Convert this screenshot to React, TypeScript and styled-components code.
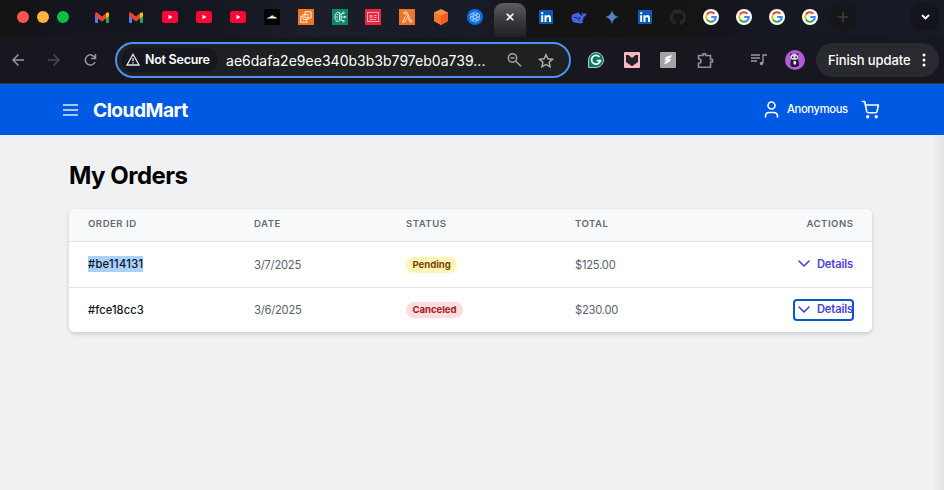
import React from "react";
import styled, { createGlobalStyle } from "styled-components";

const GlobalStyle = createGlobalStyle`
  * { box-sizing: border-box; }
  body { margin: 0; font-family: Inter, "Liberation Sans", sans-serif; background: #f0f1f3; overflow: hidden; }
  svg { display: block; flex: none; }
  button { font: inherit; border: 0; background: none; padding: 0; }
`;

const Window = styled.div`
  width: 944px;
  height: 490px;
  display: flex;
  flex-direction: column;
  overflow: hidden;
`;

/* ---------- Browser chrome ---------- */
const TabStrip = styled.div`
  height: 37px;
  flex: none;
  display: flex;
  align-items: stretch;
  background: linear-gradient(90deg, #141414 0, #141416 30px, #14151e 50px, #15161f 190px, #1b1d28 310px, #191b26 480px, #131314 535px, #141414 680px, #151721 760px, #171925 944px);
`;
const WindowControls = styled.div`
  width: 85px;
  height: 34px;
  padding-left: 17px;
  display: flex;
  align-items: center;
  gap: 8px;
`;
const Light = styled.span<{ $color: string }>`
  width: 12px;
  height: 12px;
  border-radius: 50%;
  background: ${(p) => p.$color};
`;
const Tab = styled.div<{ $width: number }>`
  width: ${(p) => p.$width}px;
  height: 34px;
  display: flex;
  align-items: center;
  justify-content: center;
  flex: none;
`;
const ActiveTab = styled.div`
  width: 32px;
  height: 34px;
  margin: 3px 3px 0 2px;
  padding-bottom: 6px;
  border-radius: 9px 9px 0 0;
  background: linear-gradient(#5c5c61, #39393e 50%, #202127);
  display: flex;
  align-items: center;
  justify-content: center;
  flex: none;
`;
const TabMenu = styled.div`
  width: 28px;
  height: 28px;
  margin: 3px 5px 0 auto;
  border-radius: 9px;
  background: #14151c;
  display: flex;
  align-items: center;
  justify-content: center;
`;
const NewTab = styled.div`
  width: 28px;
  height: 28px;
  margin: 3px 0 0 3px;
  border-radius: 50%;
  background: #14161a;
  display: flex;
  align-items: center;
  justify-content: center;
`;
const Toolbar = styled.div`
  height: 47px;
  flex: none;
  display: flex;
  align-items: center;
  background: #17181f;
  border-bottom: 1px solid #35363c;
  color: #fff;
`;
const Slot = styled.div<{ $width: number; $before?: number }>`
  width: ${(p) => p.$width}px;
  margin-left: ${(p) => p.$before ?? 0}px;
  display: flex;
  justify-content: center;
  flex: none;
`;
const NavButtons = styled.div`
  width: 115px;
  display: flex;
  align-items: center;
  flex: none;
`;
const AddressBar = styled.div`
  width: 456px;
  height: 36px;
  border: 2px solid #4e8ff0;
  border-radius: 18px;
  background: #1f2022;
  display: flex;
  align-items: center;
  padding-left: 4px;
  flex: none;
`;
const SecurityChip = styled.div`
  width: 97px;
  height: 24px;
  border-radius: 12px;
  background: #17181f;
  display: flex;
  align-items: center;
  gap: 5px;
  padding: 0 0 1px 5px;
  font-size: 12.5px;
  font-weight: 600;
  letter-spacing: -0.26px;
  white-space: nowrap;
  flex: none;
`;
const Address = styled.span`
  width: 280px;
  padding-left: 8px;
  font-size: 14px;
  letter-spacing: 0.02px;
  white-space: nowrap;
  flex: none;
`;
const Extensions = styled.div`
  width: 245px;
  padding-left: 7px;
  display: flex;
  align-items: center;
  flex: none;
`;
const UpdateButton = styled.button`
  width: 123px;
  height: 34px;
  border-radius: 17px;
  background: #292a30;
  color: #fff;
  font-size: 13px;
  font-weight: 500;
  letter-spacing: -0.08px;
  display: flex;
  align-items: center;
  gap: 11px;
  padding-left: 12px;
  white-space: nowrap;
`;

/* ---------- Site ---------- */
const SiteHeader = styled.header`
  height: 51px;
  flex: none;
  background: #0059e2;
  color: #fff;
  display: flex;
  align-items: center;
  padding: 0 64px 0 62px;
`;
const Brand = styled.span`
  margin: 1px auto 0 14px;
  font-size: 19.2px;
  line-height: 24px;
  font-weight: 700;
  letter-spacing: -0.52px;
`;
const UserName = styled.span`
  width: 61px;
  margin: 0 13px 1px 8px;
  font-size: 11.2px;
  font-weight: 500;
  letter-spacing: -0.35px;
  white-space: nowrap;
`;
const Content = styled.main`
  flex: 1;
  padding: 25px 72px 0 69px;
  background: linear-gradient(90deg, #f0f1f3 0, #f0f1f3 932px, #e9eaec 939px, #e1e2e4 944px);
`;
const Title = styled.h1`
  margin: 0 0 17px;
  font-size: 24px;
  line-height: 32px;
  font-weight: 700;
  letter-spacing: -0.5px;
  color: #000;
`;
const Table = styled.section`
  width: 803px;
  border-radius: 6px;
  overflow: hidden;
  background: #fff;
  box-shadow: 0 2px 4px rgba(0, 0, 0, 0.16);
`;
const Row = styled.div<{ $height: number; $head?: boolean; $last?: boolean }>`
  height: ${(p) => p.$height}px;
  display: grid;
  grid-template-columns: 166px 152px 169px 1fr 110px;
  align-items: center;
  padding: 0 19px;
  border-bottom: ${(p) => (p.$last ? "0" : "1px solid #dfe1e5")};
  background: ${(p) => (p.$head ? "#f8f9fb" : "#fff")};
  color: ${(p) => (p.$head ? "#646b78" : "#596170")};
  font-size: ${(p) => (p.$head ? 9.6 : 11.2)}px;
  font-weight: ${(p) => (p.$head ? 600 : 400)};
  letter-spacing: ${(p) => (p.$head ? 0.5 : -0.23)}px;
  line-height: 16px;
  padding-bottom: ${(p) => (p.$head ? 3 : 0)}px;
`;
const HeadEnd = styled.span`
  text-align: right;
  margin-right: -0.5px;
`;
const OrderId = styled.span<{ $selected: boolean }>`
  justify-self: start;
  margin-top: -1px;
  font-weight: 500;
  letter-spacing: ${(p) => (p.$selected ? 0.28 : 0.04)}px;
  color: #10131b;
  background: ${(p) => (p.$selected ? "#a8d1fb" : "transparent")};
`;
const Badge = styled.span<{ $tone: string }>`
  justify-self: start;
  height: 16px;
  padding: 0 6.5px;
  border-radius: 8px;
  font-size: 9.6px;
  font-weight: 700;
  letter-spacing: -0.05px;
  background: ${(p) => (p.$tone === "Pending" ? "#fff5b4" : "#ffdcdd")};
  color: ${(p) => (p.$tone === "Pending" ? "#7b440e" : "#9c1c20")};
`;
const DetailsButton = styled.button<{ $focused: boolean }>`
  justify-self: end;
  width: 61px;
  height: 22px;
  margin-right: -1px;
  border-radius: 4px;
  box-shadow: ${(p) => (p.$focused ? "inset 0 0 0 2px #075ac2" : "none")};
  color: #4a3edb;
  font-weight: 600;
  letter-spacing: -0.15px;
  display: flex;
  align-items: center;
  justify-content: flex-end;
  gap: 6.5px;
  padding: 0 1px 2px 0;
`;

const Gmail = () => (
  <svg width="14" height="11" viewBox="0 0 14 11">
    <path d="M0 2h3v9H1Q0 11 0 10z" fill="#3f83ed" />
    <path d="M11 2h3v8q0 1-1 1h-2z" fill="#22a94d" />
    <path d="M11 1.3 12 .5Q14-.4 14 2v2l-3 2.4z" fill="#fbbd12" />
    <path d="M0 2Q0-.4 2 .5l5 3.9 4-3.1v5.1L7 9.4 3 6.4 0 4z" fill="#e94335" />
  </svg>
);
const YouTube = () => (
  <svg width="16" height="12" viewBox="0 0 16 12">
    <rect width="16" height="12" rx="2.5" fill="#ff0634" />
    <path d="M6.5 3.7v4.6L10.5 6z" fill="#fff" />
  </svg>
);
const Horizon = () => (
  <svg width="16" height="16" viewBox="0 0 16 16">
    <path fill="#030303" d="M0 0h16v16H0z" />
    <path d="M2.500 9.500Q4 8 5.800 8q1.800-2.800 4.200-.4 2 .2 3.200 1.900z" fill="#f4eeee" />
    <path d="m8 6.300 2 1" stroke="#e2696d" />
  </svg>
);
const Ec2 = () => (
  <svg width="16" height="16" viewBox="0 0 16 16" fill="none" stroke="#ffe8d5" strokeWidth="1.100">
    <path fill="#ee7725" stroke="none" d="M0 0h16v16H0z" />
    <rect x="7" y="2.800" width="6.200" height="6.200" rx=".8" />
    <rect x="5" y="5.500" width="5" height="5" rx=".8" />
    <path d="M4.500 7.300H2.800v5.900h5.900v-2" />
  </svg>
);
const Brain = () => (
  <svg width="16" height="16" viewBox="0 0 16 16" fill="none" stroke="#d8fff2" strokeWidth=".9">
    <path fill="#128669" stroke="none" d="M0 0h16v16H0z" />
    <path d="M7.500 3.500Q5 2 4.500 4.500 2.500 5 3.200 7 2 9 3.600 10.500 4 13 6.200 12.500l1.300-.8zM4.500 5l1.500 1M3.500 8H6M4.500 11l1.300-1M9 4v8M9 6l2-2M9 8h4M9 10l2 2" />
    <circle cx="11.500" cy="3.800" r=".8" /><circle cx="13" cy="8" r=".8" /><circle cx="11.500" cy="12.200" r=".8" />
  </svg>
);
const Registry = () => (
  <svg width="16" height="16" viewBox="0 0 16 16" fill="none" stroke="#ffb3bd" strokeWidth=".9">
    <path fill="#e52843" stroke="none" d="M0 0h16v16H0z" />
    <rect x="2.500" y="3.500" width="11" height="9" /><path d="M5 6.500h2v2H5zM9 6.500h2.500M9 8.500h2.500M4.500 10.500H11" />
  </svg>
);
const Lambda = () => (
  <svg width="16" height="16" viewBox="0 0 16 16" fill="none" stroke="#fff1e5">
    <path fill="#ed7428" stroke="none" d="M0 0h16v16H0z" />
    <path d="M5 3h3l3.700 8.500.9-.4.6 1.300-2.300.8L7.200 4.800H5zM6.600 7.500 3.500 13h2.200l2.200-3.700" strokeWidth=".85" />
  </svg>
);
const Cube = () => (
  <svg width="16" height="16" viewBox="0 0 16 16">
    <path d="m8 0 7 3.500V12l-7 4-7-4V3.500z" fill="#f98f43" />
    <path d="m1 3.500 7 3.200V16l-7-4z" fill="#f1762f" /><path d="m15 3.500-7 3.200V16l7-4z" fill="#f6591d" />
  </svg>
);
const Swirl = () => (
  <svg width="16" height="16" viewBox="0 0 16 16" fill="none" stroke="#bddcff" strokeWidth=".75">
    <circle cx="8" cy="8" r="8" fill="#086ce6" stroke="none" />
    {[0, 60, 120, 180, 240, 300].map((a) => (
      <path key={a} transform={`rotate(${a} 8 8)`} d="M6 8V4.800Q6.500 2.500 8.500 3q2 .6 1.800 2.500L8 7" />
    ))}
  </svg>
);
const LinkedIn = () => (
  <svg width="14" height="14" viewBox="0 0 14 14">
    <rect width="14" height="14" rx="1" fill="#075cb8" />
    <circle cx="3.200" cy="3.100" r="1.200" fill="#fff" />
    <path d="M2.200 5.300h2V12h-2zM5.500 5.300h1.900v1Q8 5.100 9.500 5.100q2.500 0 2.500 3V12h-2V8.600q0-1.700-1.200-1.700T7.500 8.600V12h-2z" fill="#fff" />
  </svg>
);
const Whale = () => (
  <svg width="16" height="13" viewBox="0 0 16 13">
    <path d="M.5 6.500Q.5 2.500 5 2.500q2-.2 2-1.500 1 1 1.500 2L11 5q.4-1.500-.3-3.500Q12 1.500 12.500 3q1.300-.6 3-1-.2 3.200-2.800 4-.3 3-1.700 4.200l1.500 1.300Q9 13 7 12 .5 12 .5 6.500z" fill="#4564ee" />
    <path d="M2.800 6.200q3.500-.5 5.700 3.600M7.300 6q1.800.3 2.200 2" fill="none" stroke="#15171c" strokeWidth=".9" />
  </svg>
);
const Spark = () => (
  <svg width="14" height="14" viewBox="0 0 14 14">
    <defs><linearGradient id="spark" x2="1"><stop stopColor="#b0668c" /><stop offset=".5" stopColor="#4688c8" /><stop offset="1" stopColor="#3a83d8" /></linearGradient></defs>
    <path d="M7 0q1 6 7 7-6 1-7 7-1-6-7-7 6-1 7-7" fill="url(#spark)" />
  </svg>
);
const GitHub = () => (
  <svg width="16" height="16" viewBox="0 0 24 24">
    <path fill="#262a2f" d="M12 .5a12 12 0 0 0-3.800 23.400c.6.100.8-.3.800-.600v-2.200c-3.300.7-4-1.400-4-1.400-.5-1.400-1.300-1.800-1.300-1.800-1.100-.7.100-.7.100-.7 1.200.1 1.800 1.200 1.800 1.200 1.100 1.800 2.800 1.300 3.500 1 .1-.8.400-1.300.8-1.600-2.700-.3-5.500-1.300-5.500-5.900 0-1.300.5-2.400 1.200-3.200-.1-.3-.5-1.500.1-3.200 0 0 1-.3 3.300 1.200a11.500 11.500 0 0 1 6 0C17.300 5.200 18.300 5.500 18.300 5.500c.7 1.700.2 2.900.1 3.200.8.800 1.200 1.900 1.200 3.200 0 4.600-2.800 5.600-5.500 5.900.4.400.8 1.100.8 2.200v3.300c0 .3.200.7.800.6A12 12 0 0 0 12 .5" />
  </svg>
);
const Google = () => (
  <svg width="16" height="16" viewBox="0 0 16 16" fill="none" strokeWidth="2">
    <circle cx="8" cy="8" r="8" fill="#fff" />
    <path d="M3.900 5.500A4.800 4.800 0 0 1 11.400 4.600" stroke="#ea4335" />
    <path d="M3.900 5.500a4.800 4.800 0 0 0 0 5" stroke="#fbbc05" />
    <path d="M3.900 10.500a4.800 4.800 0 0 0 7.300 1" stroke="#34a853" />
    <path d="M11.200 11.500A4.800 4.800 0 0 0 12.800 8.100H8.200" stroke="#4285f4" />
  </svg>
);
const Grammar = () => (
  <svg width="16" height="16" viewBox="0 0 16 16">
    <path d="M8 .5a7.500 7.500 0 0 1 0 15H.5V8A7.500 7.500 0 0 1 8 .5" fill="#087b64" stroke="#b4cbc6" />
    <path d="M11.400 5A4.400 4.400 0 1 0 12.300 8.700H8.800" fill="none" stroke="#fff" strokeWidth="1.700" />
  </svg>
);
const Pocket = () => (
  <svg width="16" height="16" viewBox="0 0 16 16"><rect width="16" height="16" rx="1" fill="#ffb6bd" /><path d="m2 3 2.500 0L8 6l3.500-3H14v7l-6 4.200L2 10z" fill="#202328" /></svg>
);
const Scribe = () => (
  <svg width="16" height="16" viewBox="0 0 16 16"><rect width="16" height="16" rx="1" fill="#a4a4a5" /><path d="m6 5 6-2-1.500 3-3 1H11L9.500 9.800 4 12.500l1.200-3L8 8.500H4.500z" fill="#fff" /></svg>
);
const Panda = () => (
  <svg width="20" height="20" viewBox="0 0 20 20">
    <circle cx="10" cy="10" r="10" fill="#b15add" />
    <circle cx="6.300" cy="4.700" r="1.300" fill="#202027" /><circle cx="12.200" cy="4.500" r="1.300" fill="#202027" />
    <path d="M6 9h7l1.200 6.500-3 1.500H7L5.300 15z" fill="#1f1d26" />
    <ellipse cx="9.300" cy="7" rx="3.800" ry="2.900" fill="#d9d5de" />
    <ellipse cx="9.800" cy="12.700" rx="1.500" ry="2" fill="#eae5ec" />
    <path d="M7 6.500h1.500V8H7zM10.500 6.500H12V8h-1.500z" fill="#23212b" />
  </svg>
);

const tabsBefore = [Gmail, Gmail, YouTube, YouTube, YouTube, Horizon, Ec2, Brain, Registry, Lambda, Cube, Swirl];
const tabsAfter = [LinkedIn, Whale, Spark, LinkedIn, GitHub, Google, Google, Google, Google];

const orders = [
  { id: "#be114131", date: "3/7/2025", status: "Pending", total: "$125.00", height: 46, selected: true, focused: false },
  { id: "#fce18cc3", date: "3/6/2025", status: "Canceled", total: "$230.00", height: 44, selected: false, focused: true },
];

const BrowserTabs = () => (
  <TabStrip>
    <WindowControls><Light $color="#ff5554" /><Light $color="#ffb43c" /><Light $color="#00c343" /></WindowControls>
    {tabsBefore.map((Icon, i) => <Tab key={i} $width={33.95}><Icon /></Tab>)}
    <ActiveTab><svg width="8" height="8" viewBox="0 0 8 8" stroke="#fff" strokeWidth="1.600"><path d="m.7.7 6.600 6.600M7.300.7.700 7.300" /></svg></ActiveTab>
    {tabsAfter.map((Icon, i) => <Tab key={i} $width={33}><Icon /></Tab>)}
    <NewTab><svg width="10" height="10" stroke="#3c3e42" strokeWidth="1.500"><path d="M5 0v10M0 5h10" /></svg></NewTab>
    <TabMenu><svg width="9" height="6" fill="none" stroke="#fff" strokeWidth="1.800"><path d="m1 1 3.500 3.500L8 1" /></svg></TabMenu>
  </TabStrip>
);

const BrowserToolbar = () => (
  <Toolbar>
    <NavButtons>
      <Slot $width={36}><svg width="12" height="12" fill="none" stroke="#96979a" strokeWidth="1.500"><path d="M12 6H1M6.500.5 1 6l5.500 5.500" /></svg></Slot>
      <Slot $width={36}><svg width="12" height="12" fill="none" stroke="#494a50" strokeWidth="1.500"><path d="M0 6h11M5.500.5 11 6l-5.500 5.500" /></svg></Slot>
      <Slot $width={36}><svg width="13" height="12" viewBox="0 0 13 12" fill="none" stroke="#96979a" strokeWidth="1.500"><path d="M10.800 3.300a5.100 5.100 0 1 0 .3 4.700M11.500 0v4.500H7" /></svg></Slot>
    </NavButtons>
    <AddressBar>
      <SecurityChip>
        <svg width="14" height="13" viewBox="0 0 14 13" fill="none" stroke="#e7e7e9" strokeWidth="1.300"><path d="m7 1.300 6 10.700H1zM7 5v3.200M7 9.300v1.300" /></svg>
        Not Secure
      </SecurityChip>
      <Address>ae6dafa2e9ee340b3b3b797eb0a739...</Address>
      <Slot $width={32}><svg width="15" height="14" viewBox="0 0 15 14" fill="none" stroke="#a3a4a7" strokeWidth="1.500"><circle cx="5.500" cy="5" r="4.200" /><path d="m8.800 8.200 5.200 5M3.500 5h4" /></svg></Slot>
      <Slot $width={32}><svg width="16" height="15" viewBox="0 0 16 15" fill="none" stroke="#b1b2b5" strokeWidth="1.400"><path d="m8 1.700 1.900 4.100 4.600.5-3.400 3 1 4.500L8 11.500l-4.100 2.300 1-4.500-3.400-3 4.600-.5z" /></svg></Slot>
    </AddressBar>
    <Extensions>
      <Slot $width={36}><Grammar /></Slot>
      <Slot $width={36}><Pocket /></Slot>
      <Slot $width={36}><Scribe /></Slot>
      <Slot $width={38}><svg width="17" height="17" viewBox="0 0 17 17" fill="none" stroke="#8e9095" strokeWidth="1.600"><path d="M1.500 3.500H6V1.700h2.500v1.800h5v4h2v2.500h-2v5.200h-12v-4q2.600-.3 2.600-2.200T1.500 6.800z" /></svg></Slot>
      <Slot $width={52} $before={9}><svg width="16" height="12" viewBox="0 0 16 12" fill="none" stroke="#999a9e" strokeWidth="1.300"><path d="M0 1h9M0 4h9M0 7h6M12 9V1h4" /><circle cx="10.500" cy="9.500" r="1.700" fill="#999a9e" stroke="none" /></svg></Slot>
      <Slot $width={20}><Panda /></Slot>
    </Extensions>
    <UpdateButton>Finish update<svg width="4" height="14" fill="#fff"><circle cx="2" cy="2" r="1.500" /><circle cx="2" cy="7" r="1.500" /><circle cx="2" cy="12" r="1.500" /></svg></UpdateButton>
  </Toolbar>
);

export default function App() {
  return (
    <Window>
      <GlobalStyle />
      <BrowserTabs />
      <BrowserToolbar />
      <SiteHeader>
        <svg width="17" height="14" viewBox="0 0 17 14" stroke="#dfe9ff" strokeWidth="1.600"><path d="M1 2h15M1 7h15M1 12h15" /></svg>
        <Brand>CloudMart</Brand>
        <svg width="15" height="17" viewBox="0 0 15 17" fill="none" stroke="#fff" strokeWidth="1.600"><circle cx="7.500" cy="4.500" r="3.500" /><path d="M1.500 16.500v-1.300q0-3.700 3.700-3.700h4.600q3.700 0 3.700 3.700v1.300" /></svg>
        <UserName>Anonymous</UserName>
        <svg width="19" height="19" viewBox="0 0 19 19" fill="none" stroke="#fff" strokeWidth="1.600" strokeLinecap="round" strokeLinejoin="round"><path d="M1.500 1.500h2.200l2 9.800q.3 1.500 1.800 1.500h6.800q1.500 0 1.800-1.500L17.400 5H4.500" /><circle cx="6.700" cy="16.700" r=".9" /><circle cx="15.200" cy="16.700" r=".9" /></svg>
      </SiteHeader>
      <Content>
        <Title>My Orders</Title>
        <Table>
          <Row $height={33} $head><span>ORDER ID</span><span>DATE</span><span>STATUS</span><span>TOTAL</span><HeadEnd>ACTIONS</HeadEnd></Row>
          {orders.map((o, i) => (
            <Row key={o.id} $height={o.height} $last={i === orders.length - 1}>
              <OrderId $selected={o.selected}>{o.id}</OrderId>
              <span>{o.date}</span>
              <Badge $tone={o.status}>{o.status}</Badge>
              <span>{o.total}</span>
              <DetailsButton $focused={o.focused}>
                <svg width="12" height="7" viewBox="0 0 12 7" fill="none" stroke="currentColor" strokeWidth="1.600" strokeLinecap="round" strokeLinejoin="round"><path d="m1 1 5 5 5-5" /></svg>
                Details
              </DetailsButton>
            </Row>
          ))}
        </Table>
      </Content>
    </Window>
  );
}
